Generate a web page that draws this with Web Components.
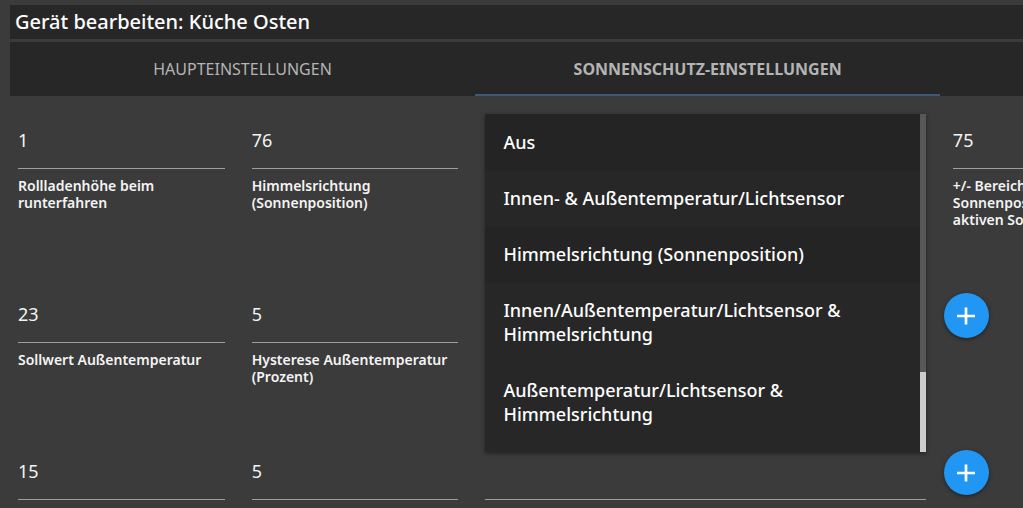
<!DOCTYPE html>
<html lang="de">
<head>
<meta charset="utf-8">
<title>Gerät bearbeiten</title>
<style>
  html {
    overflow: hidden;
  }
  body {
    margin: 0;
    background: #3b3b3b;
    color: #f4f4f4;
    font-family: "Noto Sans", "Open Sans", sans-serif;
    font-size: 18px;
  }
</style>
</head>
<body>
<device-dialog>
  <span slot="title">Gerät bearbeiten: Küche Osten</span>
  <tab-bar slot="tabs">
    <tab-item>Haupteinstellungen</tab-item>
    <tab-item active>Sonnenschutz-Einstellungen</tab-item>
    <tab-item></tab-item>
  </tab-bar>

  <number-field value="1" row-start>Rollladenhöhe beim<br>runterfahren</number-field>
  <number-field value="76">Himmelsrichtung<br>(Sonnenposition)</number-field>
  <select-field wide open>
    <menu-option shaded>Aus</menu-option>
    <menu-option>Innen- &amp; Außentemperatur/Lichtsensor</menu-option>
    <menu-option shaded>Himmelsrichtung (Sonnenposition)</menu-option>
    <menu-option>Innen/Außentemperatur/Lichtsensor &amp; Himmelsrichtung</menu-option>
    <menu-option>Außentemperatur/Lichtsensor &amp; Himmelsrichtung</menu-option>
  </select-field>
  <number-field value="75" row-end>+/- Bereich<br>Sonnenposition<br>aktiven Sonnenschutz</number-field>

  <number-field value="23" row-start>Sollwert Außentemperatur</number-field>
  <number-field value="5">Hysterese Außentemperatur<br>(Prozent)</number-field>
  <select-field wide></select-field>
  <add-button row-end></add-button>

  <number-field value="15" row-start></number-field>
  <number-field value="5"></number-field>
  <select-field wide></select-field>
  <add-button row-end></add-button>
</device-dialog>

<script>
class DeviceDialog extends HTMLElement {
  constructor() {
    super();
    this.attachShadow({mode: "open"});
  }
  static get styles() {
    return `
    :host {
      display: block;
      overflow: hidden;
      padding: 5px 0 0 10px;
    }
    /** Content is wider than the window and cut at its right edge **/
    .content {
      width: calc(136vw + 4px);
    }
    h1 {
      margin: 0 0 3px;
      padding: 0 5px;
      background: #272727;
      color: #fff;
      font-size: 20px;
      font-weight: 500;
      line-height: 34px;
    }
    /** Six columns, a wide field takes two **/
    .fields {
      display: grid;
      grid-template-columns: repeat(6, minmax(0, 1fr));
      column-gap: 27px;
      row-gap: 60px;
      align-items: start;
      padding: 18px 12px 0 8px;
    }
    ::slotted([row-start]) {
      grid-column: 1;
    }
    ::slotted([wide]) {
      grid-column: 3 / span 2;
    }
    ::slotted([row-end]) {
      grid-column: 5;
    }
    `;
  }
  connectedCallback() {
    this.shadowRoot.innerHTML = `
    <style>${DeviceDialog.styles}</style>
    <div class="content">
      <h1><slot name="title"></slot></h1>
      <slot name="tabs"></slot>
      <div class="fields"><slot></slot></div>
    </div>
    `;
  }
}

class TabBar extends HTMLElement {
  constructor() {
    super();
    this.attachShadow({mode: "open"});
  }
  connectedCallback() {
    this.shadowRoot.innerHTML = `
    <style>
    :host {
      display: block;
      background: #272727;
    }
    nav {
      display: grid;
      grid-template-columns: repeat(3, minmax(0, 1fr));
    }
    </style>
    <nav><slot></slot></nav>
    `;
  }
}

class TabItem extends HTMLElement {
  constructor() {
    super();
    this.attachShadow({mode: "open"});
  }
  static get styles() {
    return `
    :host {
      display: block;
    }
    a {
      display: block;
      box-sizing: border-box;
      height: 54px;
      border-bottom: 2px solid transparent;
      color: #b4b4b4;
      font-size: 16px;
      line-height: 54px;
      text-align: center;
      text-decoration: none;
      text-transform: uppercase;
    }
    :host([active]) a {
      border-bottom-color: #3f5878;
      font-weight: 700;
    }
    `;
  }
  connectedCallback() {
    this.shadowRoot.innerHTML = `
    <style>${TabItem.styles}</style>
    <a href="#"><slot></slot></a>
    `;
  }
}

class NumberField extends HTMLElement {
  constructor() {
    super();
    this.attachShadow({mode: "open"});
  }
  static get styles() {
    return `
    :host {
      display: block;
    }
    input {
      display: block;
      box-sizing: border-box;
      width: 100%;
      height: 55px;
      margin: 0 0 8px;
      padding: 0 0 2px;
      border: 0;
      border-bottom: 1px solid #9e9e9e;
      background: transparent;
      color: inherit;
      font: inherit;
      outline: none;
    }
    label {
      display: block;
      font-size: 14px;
      font-weight: 600;
      line-height: 17px;
    }
    `;
  }
  connectedCallback() {
    this.shadowRoot.innerHTML = `
    <style>${NumberField.styles}</style>
    <input id="value" type="text" inputmode="numeric" value="${this.getAttribute("value")}">
    <label for="value"><slot></slot></label>
    `;
  }
}

class SelectField extends HTMLElement {
  constructor() {
    super();
    this.attachShadow({mode: "open"});
  }
  static get styles() {
    return `
    :host {
      display: block;
      position: relative;
    }
    select {
      display: block;
      appearance: none;
      box-sizing: border-box;
      width: 100%;
      height: 55px;
      border: 0;
      border-bottom: 1px solid #9e9e9e;
      border-radius: 0;
      background: transparent;
      color: inherit;
      font: inherit;
    }
    /** Menu lies over the fields below **/
    .menu {
      display: none;
      position: absolute;
      top: 0;
      left: 0;
      z-index: 1;
      width: 100%;
      height: 338px;
      background: #272727;
      box-shadow: 0 2px 2px rgba(0, 0, 0, 0.14), 0 1px 5px rgba(0, 0, 0, 0.3);
    }
    :host([open]) .menu {
      display: flex;
    }
    .options {
      flex: 1;
      min-width: 0;
    }
    .track {
      display: flex;
      flex-direction: column;
      justify-content: flex-end;
      width: 6px;
      background: #585858;
    }
    .thumb {
      height: 80px;
      background: #cdcdcd;
    }
    `;
  }
  connectedCallback() {
    this.shadowRoot.innerHTML = `
    <style>${SelectField.styles}</style>
    <select></select>
    <div class="menu">
      <div class="options" role="listbox"><slot></slot></div>
      <div class="track"><div class="thumb"></div></div>
    </div>
    `;
  }
}

class MenuOption extends HTMLElement {
  constructor() {
    super();
    this.attachShadow({mode: "open"});
  }
  static get styles() {
    return `
    :host {
      display: block;
    }
    button {
      display: block;
      width: 100%;
      padding: 16px 18px;
      border: 0;
      background: transparent;
      color: #fff;
      font: inherit;
      font-size: 18px;
      font-weight: 500;
      line-height: 24px;
      text-align: left;
    }
    :host([shaded]) button {
      background: #242424;
    }
    `;
  }
  connectedCallback() {
    this.shadowRoot.innerHTML = `
    <style>${MenuOption.styles}</style>
    <button type="button" role="option"><slot></slot></button>
    `;
  }
}

class AddButton extends HTMLElement {
  constructor() {
    super();
    this.attachShadow({mode: "open"});
  }
  static get styles() {
    return `
    :host {
      display: flex;
      align-items: center;
      height: 55px;
      margin-left: -9px;
    }
    button {
      display: flex;
      align-items: center;
      justify-content: center;
      width: 45px;
      height: 45px;
      padding: 0;
      border: 0;
      border-radius: 50%;
      background: #2196f3;
      box-shadow: 0 2px 2px rgba(0, 0, 0, 0.14), 0 1px 5px rgba(0, 0, 0, 0.3);
    }
    svg {
      width: 18px;
      height: 18px;
      stroke: #fff;
      stroke-width: 2.7;
    }
    `;
  }
  connectedCallback() {
    this.shadowRoot.innerHTML = `
    <style>${AddButton.styles}</style>
    <button type="button">
      <svg viewBox="0 0 18 18"><path d="M9 0.5v17M0 9h18"/></svg>
    </button>
    `;
  }
}

window.customElements.define("device-dialog", DeviceDialog);
window.customElements.define("tab-bar", TabBar);
window.customElements.define("tab-item", TabItem);
window.customElements.define("number-field", NumberField);
window.customElements.define("select-field", SelectField);
window.customElements.define("menu-option", MenuOption);
window.customElements.define("add-button", AddButton);
</script>
</body>
</html>
